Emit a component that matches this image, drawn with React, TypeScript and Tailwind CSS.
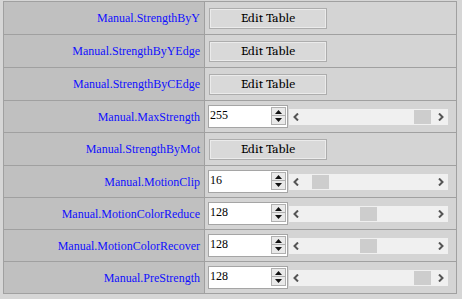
type Row =
  | { label: string; kind: 'table' }
  | { label: string; kind: 'num'; value: string; thumb: number };

const rows: Row[] = [
  { label: 'Manual.StrengthByY', kind: 'table' },
  { label: 'Manual.StrengthByYEdge', kind: 'table' },
  { label: 'Manual.StrengthByCEdge', kind: 'table' },
  { label: 'Manual.MaxStrength', kind: 'num', value: '255', thumb: 125 },
  { label: 'Manual.StrengthByMot', kind: 'table' },
  { label: 'Manual.MotionClip', kind: 'num', value: '16', thumb: 23 },
  { label: 'Manual.MotionColorReduce', kind: 'num', value: '128', thumb: 71 },
  { label: 'Manual.MotionColorRecover', kind: 'num', value: '128', thumb: 71 },
  { label: 'Manual.PreStrength', kind: 'num', value: '128', thumb: 125 },
];

function EditButton() {
  return (
    <button className="ml-[4px] h-[21px] w-[118px] border border-[#adadad] bg-[#d9d9d9] font-serif text-[13.33px] leading-none text-black shadow-[inset_0_0_0_1px_#ebebeb]">
      Edit Table
    </button>
  );
}

function Chevron({ dir }: { dir: 'l' | 'r' }) {
  return (
    <svg width="6" height="8" viewBox="0 0 6 8" className="shrink-0">
      <polyline
        points={dir === 'l' ? '5,0.5 1.5,4 5,7.5' : '1,0.5 4.5,4 1,7.5'}
        fill="none"
        stroke="#555"
        strokeWidth="2"
      />
    </svg>
  );
}

function NumberField({ value, thumb }: { value: string; thumb: number }) {
  return (
    <div className="flex items-center">
      <div className="ml-[3px] flex h-[23px] w-[80px] border border-[#a5a5a5] bg-white">
        <span className="flex-1 pl-[1px] pt-[2px] font-[Liberation_Serif] text-[12px] leading-[14px] text-black">{value}</span>
        <div className="mr-[1px] mt-[1px] flex h-[18px] w-[15px] flex-col border border-[#b0b0b0] bg-[#e9e9e9]">
          <div className="flex h-1/2 items-center justify-center border-b border-[#b0b0b0]">
            <svg width="7" height="4" viewBox="0 0 7 4">
              <polygon points="3.5,0 7,4 0,4" fill="#111" />
            </svg>
          </div>
          <div className="flex h-1/2 items-center justify-center">
            <svg width="7" height="4" viewBox="0 0 7 4">
              <polygon points="0,0 7,0 3.5,4" fill="#111" />
            </svg>
          </div>
        </div>
      </div>
      <div className="relative ml-[1px] flex h-[16px] w-[159px] items-center justify-between bg-[#f0f0f0] px-[4px]">
        <Chevron dir="l" />
        <div
          className="absolute top-[1px] h-[14px] w-[17px] bg-[#cdcdcd]"
          style={{ left: thumb }}
        />
        <Chevron dir="r" />
      </div>
    </div>
  );
}

export default function App() {
  return (
    <div className="h-[299px] w-[462px] bg-[#d6d6d6] pl-[3px] pt-[1px]">
      <div className="w-[454px] border-x border-t border-[#a0a0a0]">
        {rows.map((r) => (
          <div
            key={r.label}
            className={`grid grid-cols-[201px_1fr] border-b border-[#a0a0a0] ${
              r.kind === 'table' ? 'h-[33px]' : 'h-[32px]'
            }`}
          >
            <div className="flex items-center justify-end border-r border-[#a0a0a0] bg-[#c0c0c0] pr-[4px] font-[Liberation_Serif] text-[12px] text-[#1010ff]">
              {r.label}
            </div>
            <div className="flex items-center bg-[#d4d4d4]">
              {r.kind === 'table' ? <EditButton /> : <NumberField value={r.value} thumb={r.thumb} />}
            </div>
          </div>
        ))}
      </div>
    </div>
  );
}
